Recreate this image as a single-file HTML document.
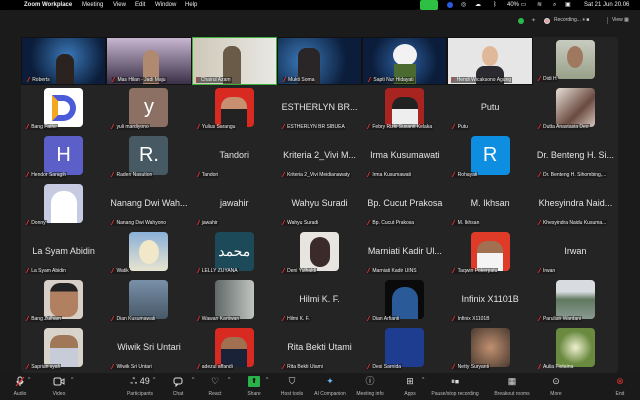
<!DOCTYPE html>
<html><head><meta charset="utf-8">
<style>
*{margin:0;padding:0;box-sizing:border-box}
body{width:640px;height:400px;overflow:hidden;background:#1c1c1c;font-family:"Liberation Sans",sans-serif;position:relative;color:#ddd}
.menu{position:absolute;left:0;top:0;width:640px;height:10px;background:#000;font-size:6px;color:#eee;line-height:10px}
.menu span{position:absolute;top:0}
.win{position:absolute;left:0;top:10px;width:640px;height:390px;background:#1b1b1b;border-radius:6px 6px 0 0}
.panel{position:absolute;left:21px;top:37px;width:597px;height:336px;background:#242424;border-radius:4px;display:grid;grid-template-columns:repeat(7,85.3px);grid-template-rows:repeat(7,48px)}
.t{position:relative;overflow:hidden}
.v{border:0.5px solid #111}
.av{position:absolute;left:50%;top:3px;width:39px;height:39px;margin-left:-19.5px;border-radius:4px;overflow:hidden;display:flex;align-items:center;justify-content:center;color:#fff;font-size:20px}
.big{position:absolute;left:0;right:0;top:17px;text-align:center;font-size:9px;color:#e4e4e4;white-space:nowrap}
.n{position:absolute;left:5px;top:39px;font-size:5px;color:#eee;white-space:nowrap;line-height:6px;padding:0 1px;background:rgba(20,20,20,.55)}
.n:before{content:"";display:inline-block;width:1.2px;height:5px;background:#e23030;transform:skewX(-25deg);margin-right:3px;vertical-align:-1px}
.tb{position:absolute;top:373px;left:0;width:640px;height:27px;background:#1a1a1a}
.ic{position:absolute;top:3px;width:12px;height:11px;color:#ddd;font-size:9px;text-align:center;line-height:11px}
.lb{position:absolute;top:18px;font-size:5px;color:#bbb;transform:translateX(-50%);white-space:nowrap}
.car{position:absolute;top:4px;font-size:5px;color:#bbb}
</style></head><body>
<div class="menu">
<span style="left:10px;font-size:8px"></span>
<span style="left:24px;font-weight:bold">Zoom Workplace</span>
<span style="left:82px">Meeting</span><span style="left:113px">View</span><span style="left:135px">Edit</span><span style="left:155px">Window</span><span style="left:185px">Help</span>
<span style="left:420px;top:0;width:18px;height:10px;background:#2ec043;border-radius:2px"></span>
<span style="left:447px;top:2px;width:6px;height:6px;border-radius:50%;background:#2a5ae0"></span>
<span style="left:461px">◎</span><span style="left:475px">☁</span><span style="left:493px">ᛒ</span>
<span style="left:507px">40% ▭</span><span style="left:537px">≋</span><span style="left:553px">⌕</span><span style="left:565px">▣</span>
<span style="left:584px">Sat 21 Jun  20.06</span>
</div>
<div class="win">
<div style="position:absolute;left:518px;top:8px;width:6px;height:6px;border-radius:50%;background:#2bbb4a"></div>
<div style="position:absolute;left:531px;top:7px;font-size:6px;color:#888">✦</div>
<div style="position:absolute;left:544px;top:8px;width:6px;height:6px;border-radius:50%;background:#e8a0a0;border:1.5px solid #ddd"></div>
<div style="position:absolute;left:554px;top:7px;font-size:5px;color:#ccc">Recording...  ⏸ ■</div>
<div style="position:absolute;left:607px;top:7px;width:1px;height:7px;background:#555"></div>
<div style="position:absolute;left:612px;top:7px;font-size:5px;color:#ccc">View ▦</div>
</div>
<div class="panel">
<!-- row1 -->
<div class="t v" style="background:radial-gradient(circle at 55% 40%,#3a78b8,#0b1d3a 70%)"><div style="position:absolute;left:34px;top:16px;width:18px;height:32px;background:#2a2320;border-radius:8px 8px 0 0"></div><span class="n" style="top:39px">Roberts</span></div>
<div class="t v" style="background:linear-gradient(#c8b6d0,#3a3048)"><div style="position:absolute;left:36px;top:12px;width:16px;height:36px;background:#b08a70;border-radius:8px 8px 0 0"></div><span class="n">Mas Hilan - Jadi Maju</span></div>
<div class="t" style="background:linear-gradient(90deg,#cfc8b8,#e8e8e4);border:1.5px solid #3bb03b"><div style="position:absolute;left:30px;top:8px;width:18px;height:38px;background:#6a5a48;border-radius:8px 8px 0 0"></div><span class="n" style="left:3px">Chairul Azam</span></div>
<div class="t v" style="background:radial-gradient(circle at 30% 50%,#3a78b8,#0b1d3a 70%)"><div style="position:absolute;left:20px;top:10px;width:22px;height:38px;background:#2a2628;border-radius:8px 8px 0 0"></div><span class="n">Mukti Soma</span></div>
<div class="t v" style="background:radial-gradient(circle at 50% 50%,#2f64a8,#0b1d3a 70%)"><div style="position:absolute;left:30px;top:6px;width:24px;height:22px;background:#f2f2f2;border-radius:50%"></div><div style="position:absolute;left:31px;top:26px;width:22px;height:22px;background:#4a6a30"></div><span class="n">Sapti Nur Hidayati</span></div>
<div class="t v" style="background:#e6e6e6"><div style="position:absolute;left:34px;top:8px;width:16px;height:20px;background:#e0b898;border-radius:50%"></div><div style="position:absolute;left:28px;top:28px;width:28px;height:20px;background:#2a2a30;border-radius:8px 8px 0 0"></div><span class="n" style="left:3px">Hendi Wicaksono Agung</span></div>
<div class="t"><div class="av" style="background:linear-gradient(#c8ccc0,#98a088)"><div style="width:16px;height:22px;background:#a07860;border-radius:50%;margin-top:-6px"></div></div><span class="n">Didi H</span></div>
<!-- row2 -->
<div class="t"><div class="av" style="background:#fff"><div style="width:24px;height:26px;border-radius:0 13px 13px 0;border:6px solid #4a5ad8;border-left-color:#f4a620"></div></div><span class="n">Bang Fathir</span></div>
<div class="t"><div class="av" style="background:#8b7063">y</div><span class="n">yuli mardiyono</span></div>
<div class="t"><div class="av" style="background:#d82a20;align-items:flex-end"><div style="width:26px;height:30px;background:linear-gradient(#c89070 40%,#222 40%);border-radius:10px 10px 0 0"></div></div><span class="n">Yulius Sarangu</span></div>
<div class="t"><div class="big">ESTHERLYN BR...</div><span class="n">ESTHERLYN BR SIBUEA</span></div>
<div class="t"><div class="av" style="background:#a82420;align-items:flex-end"><div style="width:26px;height:30px;background:linear-gradient(#222 40%,#eee 40%);border-radius:10px 10px 0 0"></div></div><span class="n">Febry Rizki Susanti Kelaka</span></div>
<div class="t"><div class="big">Putu</div><span class="n">Putu</span></div>
<div class="t"><div class="av" style="background:linear-gradient(135deg,#e8e0d8,#6a4a40 60%,#d8c8c0)"></div><span class="n">Dutta Anastasia Deo</span></div>
<!-- row3 -->
<div class="t"><div class="av" style="background:#5b5fc7">H</div><span class="n">Hendor Saragih</span></div>
<div class="t"><div class="av" style="background:#475a63">R.</div><span class="n">Raden Nasution</span></div>
<div class="t"><div class="big">Tandori</div><span class="n">Tandori</span></div>
<div class="t"><div class="big">Kriteria 2_Vivi M...</div><span class="n">Kriteria 2_Vivi Meidianawaty</span></div>
<div class="t"><div class="big">Irma Kusumawati</div><span class="n">Irma Kusumawati</span></div>
<div class="t"><div class="av" style="background:#0e8ee0">R</div><span class="n">Rohayati</span></div>
<div class="t"><div class="big">Dr. Benteng H. Si...</div><span class="n">Dr. Benteng H. Sihombing,...</span></div>
<!-- row4 -->
<div class="t"><div class="av" style="background:#c6cbe2;align-items:flex-end"><div style="width:26px;height:32px;background:#fff;border-radius:12px 12px 0 0"></div></div><span class="n">Donny</span></div>
<div class="t"><div class="big">Nanang Dwi Wah...</div><span class="n">Nanang Dwi Wahyono</span></div>
<div class="t"><div class="big">jawahir</div><span class="n">jawahir</span></div>
<div class="t"><div class="big">Wahyu Suradi</div><span class="n">Wahyu Suradi</span></div>
<div class="t"><div class="big">Bp. Cucut Prakosa</div><span class="n">Bp. Cucut Prakosa</span></div>
<div class="t"><div class="big">M. Ikhsan</div><span class="n">M. Ikhsan</span></div>
<div class="t"><div class="big">Khesyindra Naid...</div><span class="n">Khesyindra Naidu Kusuma...</span></div>
<!-- row5 -->
<div class="t"><div class="big">La Syam Abidin</div><span class="n">La Syam Abidin</span></div>
<div class="t"><div class="av" style="background:linear-gradient(#8ab0d8,#e8e4d0)"><div style="width:20px;height:24px;background:#f0e8c8;border-radius:50%"></div></div><span class="n">Watik</span></div>
<div class="t"><div class="av" style="background:#1d4a58;font-size:14px">محمد</div><span class="n">LELLY ZUYANA</span></div>
<div class="t"><div class="av" style="background:#e8e4e0"><div style="width:20px;height:30px;background:#3a2a28;border-radius:10px"></div></div><span class="n">Deni Yulhaldi</span></div>
<div class="t"><div class="big">Marniati Kadir Ul...</div><span class="n">Marniati Kadir UINS</span></div>
<div class="t"><div class="av" style="background:#e03a28;align-items:flex-end"><div style="width:26px;height:30px;background:linear-gradient(#a07050 40%,#f4f4f4 40%);border-radius:10px 10px 0 0"></div></div><span class="n">Taqwin Pokerpatu</span></div>
<div class="t"><div class="big">Irwan</div><span class="n">Irwan</span></div>
<!-- row6 -->
<div class="t"><div class="av" style="background:#d8d0c8"><div style="width:28px;height:34px;background:linear-gradient(#222 25%,#b08060 25%);border-radius:10px"></div></div><span class="n">Bang Zulham</span></div>
<div class="t"><div class="av" style="background:linear-gradient(#7890a8,#485868)"></div><span class="n">Dian Kusumawati</span></div>
<div class="t"><div class="av" style="background:linear-gradient(90deg,#606868,#c0c4c0)"></div><span class="n">Wawan Kartiwan</span></div>
<div class="t"><div class="big">Hilmi K. F.</div><span class="n">Hilmi K. F.</span></div>
<div class="t"><div class="av" style="background:#0a0a0a;align-items:flex-end"><div style="width:26px;height:32px;background:#2a5a98;border-radius:12px 12px 0 0"></div></div><span class="n">Dian Arfianti</span></div>
<div class="t"><div class="big">Infinix X1101B</div><span class="n">Infinix X1101B</span></div>
<div class="t"><div class="av" style="background:linear-gradient(#d8dce0 30%,#607860 50%,#8a9a90)"></div><span class="n">Parulian Wardani</span></div>
<!-- row7 -->
<div class="t"><div class="av" style="background:#d8d4cc;align-items:flex-end"><div style="width:28px;height:32px;background:linear-gradient(#a07858 40%,#c8ccd8 40%);border-radius:10px 10px 0 0"></div></div><span class="n">Saprian syah</span></div>
<div class="t"><div class="big">Wiwik Sri Untari</div><span class="n">Wiwik Sri Untari</span></div>
<div class="t"><div class="av" style="background:#d82a20;align-items:flex-end"><div style="width:26px;height:30px;background:linear-gradient(#a07050 40%,#1a2238 40%);border-radius:10px 10px 0 0"></div></div><span class="n">adezul affandi</span></div>
<div class="t"><div class="big">Rita Bekti Utami</div><span class="n">Rita Bekti Utami</span></div>
<div class="t"><div class="av" style="background:#1e3c90"></div><span class="n">Desi Sarnida</span></div>
<div class="t"><div class="av" style="background:radial-gradient(#c09070,#4a3a30)"></div><span class="n">Netty Suryanti</span></div>
<div class="t"><div class="av" style="background:radial-gradient(#f0f0d0,#6a8a40 60%)"></div><span class="n" style="background:none">Aulia Fiotaina</span></div>
</div>
<div class="tb">
<svg class="ic" style="left:14px" viewBox="0 0 12 11"><rect x="4" y="1" width="4" height="6" rx="2" fill="none" stroke="#ddd"/><path d="M3 5a3 3 0 0 0 6 0M6 8v2" stroke="#ddd" fill="none"/><path d="M2 10L10 1" stroke="#e23030" stroke-width="1.2"/></svg><span class="car" style="left:28px">^</span><span class="lb" style="left:20px">Audio</span>
<svg class="ic" style="left:53px" viewBox="0 0 12 11"><rect x="1" y="2" width="7" height="7" rx="1.5" fill="none" stroke="#ddd"/><path d="M8 5l3-2v5l-3-2" fill="none" stroke="#ddd"/></svg><span class="car" style="left:71px">^</span><span class="lb" style="left:59px">Video</span>
<span class="ic" style="left:128px;width:24px">ஃ 49</span><span class="car" style="left:153px">^</span><span class="lb" style="left:140px">Participants</span>
<svg class="ic" style="left:172px" viewBox="0 0 12 11"><rect x="2" y="2" width="8" height="6" rx="2" fill="none" stroke="#ddd"/><path d="M4 8v2l2-2" stroke="#ddd" fill="none"/></svg><span class="car" style="left:192px">^</span><span class="lb" style="left:178px">Chat</span>
<span class="ic" style="left:209px">♡</span><span class="car" style="left:228px">^</span><span class="lb" style="left:215px">React</span>
<div class="ic" style="left:248px;background:#2bb14a;border-radius:1px;color:#000;font-size:7px">⬆</div><span class="car" style="left:266px">^</span><span class="lb" style="left:254px">Share</span>
<span class="ic" style="left:286px">⛉</span><span class="lb" style="left:292px">Host tools</span>
<span class="ic" style="left:324px;color:#6ab4f4">✦</span><span class="lb" style="left:330px">AI Companion</span>
<span class="ic" style="left:364px">ⓘ</span><span class="lb" style="left:370px">Meeting info</span>
<span class="ic" style="left:404px">⊞</span><span class="car" style="left:422px">^</span><span class="lb" style="left:410px">Apps</span>
<span class="ic" style="left:443px;width:24px;font-size:8px">⏸⏹</span><span class="lb" style="left:455px">Pause/stop recording</span>
<span class="ic" style="left:506px">▦</span><span class="lb" style="left:512px">Breakout rooms</span>
<span class="ic" style="left:550px">⊙</span><span class="lb" style="left:556px">More</span>
<span class="ic" style="left:614px;color:#e23030">⊗</span><span class="lb" style="left:620px">End</span>
</div>
</body></html>
